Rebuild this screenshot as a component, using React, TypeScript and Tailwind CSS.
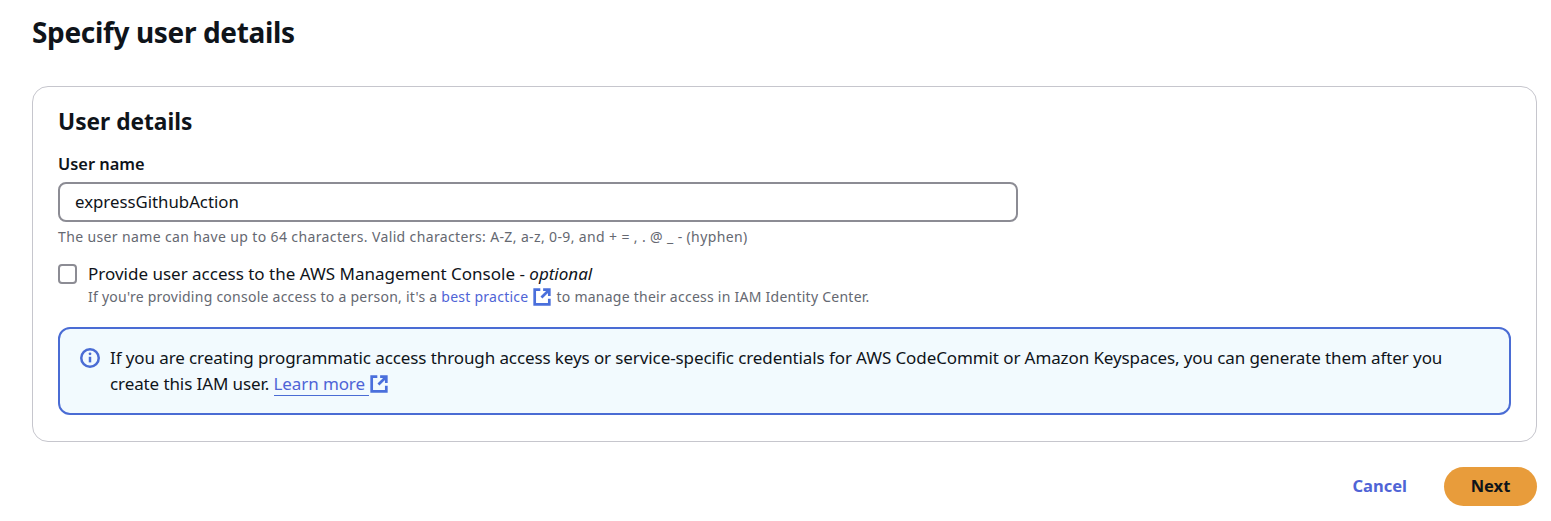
const font = "[font-family:'Noto_Sans',sans-serif]";

function ExternalIcon({ className }: { className: string }) {
  return (
    <svg viewBox="0 0 16 16" fill="none" stroke="currentColor" strokeWidth="2.4" className={className}>
      <path d="M6.5 1.5H1.5v13h13V9.5" />
      <path d="M9 1.5h5.5V7M14.5 1.5 7.5 8.5" />
    </svg>
  );
}

export default function App() {
  return (
    <div className={`${font} h-[521px] w-[1551px] overflow-hidden bg-white px-[32px] text-[#0f141a]`}>
      <h1 className="h-[86px] pt-[12px] text-[28px] leading-[40px] font-bold tracking-[-0.35px]">Specify user details</h1>

      <section className="h-[356px] w-[1505px] rounded-[16px] border border-[#c6c6cd] px-[25px] pt-[18px]">
        <h2 className="text-[22.7px] leading-[34px] font-bold">User details</h2>
        <label className="mt-[15px] block text-[16.4px] leading-[20px] font-semibold">User name</label>
        <div className="mt-[8px] flex h-[40px] w-[960px] items-center rounded-[8px] border-2 border-[#8c8c94] pl-[15px] text-[16.8px]">
          expressGithubAction
        </div>
        <p className="mt-[6px] text-[14px] leading-[18px] tracking-[0.37px] text-[#656871]">
          The user name can have up to 64 characters. Valid characters: A-Z, a-z, 0-9, and + = , . @ _ - (hyphen)
        </p>

        <div className="mt-[17px] flex gap-[11px]">
          <div className="mt-[1px] h-[20px] w-[19px] rounded-[4px] border-2 border-[#8c8c94]" />
          <div>
            <p className="text-[17px] leading-[22px]">
              Provide user access to the AWS Management Console - <i>optional</i>
            </p>
            <p className="mt-[3px] flex items-center text-[14px] leading-[18px] tracking-[0.25px] text-[#656871]">
              If you're providing console access to a person, it's a
              <span className="ml-[4px] text-[#4f64d6]">best practice</span>
              <ExternalIcon className="mx-[5px] h-[18px] w-[18px] text-[#4a6fdc]" />
              to manage their access in IAM Identity Center.
            </p>
          </div>
        </div>

        <div className="mt-[21px] flex h-[88px] w-[1453px] gap-[10px] rounded-[12px] border-2 border-[#4a6cd4] bg-[#f2fafe] pt-[16px] pl-[20px] text-[17px] leading-[26px] tracking-[-0.1px]">
          <svg viewBox="0 0 16 16" fill="none" className="mt-[3px] h-[20px] w-[20px] shrink-0 text-[#4a6cd4]">
            <circle cx="8" cy="8" r="7" stroke="currentColor" strokeWidth="2" />
            <path d="M8 7v4.5" stroke="currentColor" strokeWidth="2" />
            <circle cx="8" cy="4.6" r="1.1" fill="currentColor" />
          </svg>
          <p className="w-[1350px]">
            If you are creating programmatic access through access keys or service-specific credentials for AWS CodeCommit or Amazon Keyspaces, you can generate them after you create this IAM user.{" "}
            <span className="border-b border-[#4a6cd4] pr-[4px] text-[#4f64d6]">Learn more</span>
            <ExternalIcon className="ml-[1px] inline-block h-[18px] w-[18px] align-[-3px] text-[#4a6fdc]" />
          </p>
        </div>
      </section>

      <div className="mt-[25px] flex w-[1505px] items-center justify-end gap-[37px] text-[16.5px] font-bold">
        <button className="text-[#4f64d6]">Cancel</button>
        <button className="h-[39px] w-[93px] rounded-full bg-[#e89c3b]">Next</button>
      </div>
    </div>
  );
}
